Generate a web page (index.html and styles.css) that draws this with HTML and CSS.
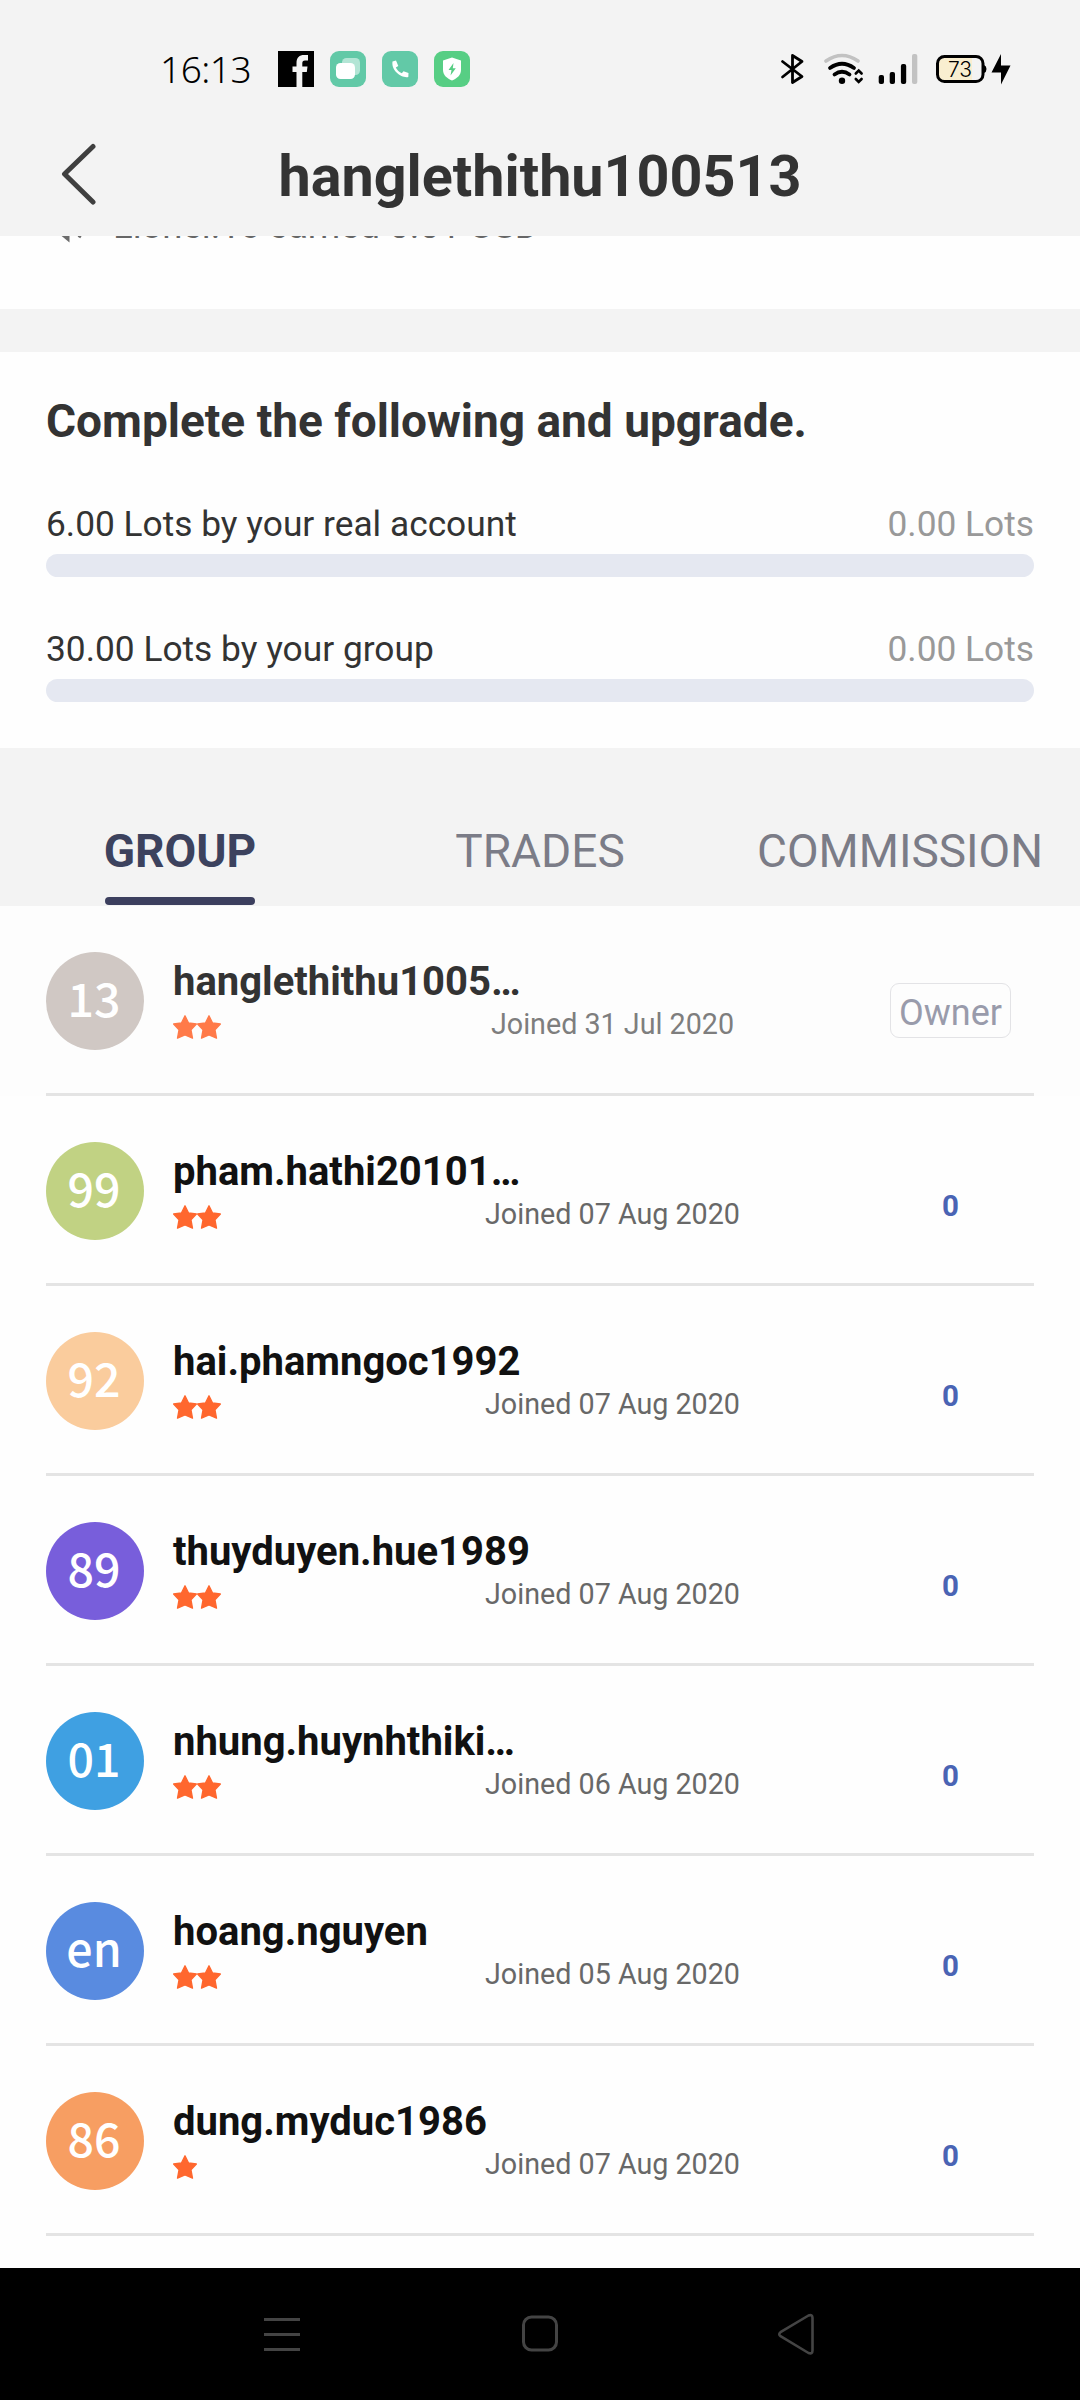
FILE: index.html
```html
<!DOCTYPE html>
<html lang="en">
<head>
<meta charset="utf-8">
<title>hanglethithu100513</title>
<link rel="stylesheet" href="styles.css">
</head>
<body>
<svg class="defs" width="0" height="0" aria-hidden="true">
  <symbol id="star" viewBox="0 0 24 24"><path d="M12 .8 15.6 8 23.4 9 18 14.800 19.500 23.200 12 20 4.500 23.200 6 14.800 .6 9 8.400 8Z" stroke-width="1.300" stroke-linejoin="round"/></symbol>
</svg>
<div class="screen">
  <div class="status">
    <span class="clock">16:13</span>
    <div class="apps">
      <svg width="36" height="36" viewBox="0 0 36 36"><rect width="36" height="36" fill="#000"/><path d="M18.5 36V21H14.5V15.5H18.5V12C18.5 6.5 21.500 4 26 4H30V9.500H27C25 9.500 24.300 10.500 24.300 12.500V15.500H29.500L28.800 21H24.300V36Z" fill="#f3f3f3"/></svg>
      <svg width="36" height="36" viewBox="0 0 36 36"><rect width="36" height="36" rx="9" fill="#62c9a7"/><rect x="12" y="7" width="18" height="17" rx="4.500" fill="#b3e5d5"/><rect x="6" y="12" width="19" height="16" rx="4.500" fill="#fff"/></svg>
      <svg width="36" height="36" viewBox="0 0 36 36"><rect width="36" height="36" rx="9" fill="#62c9a7"/><path d="M10.500 10.500 14 9.500 16.300 15 13.800 16.600C15 19 17.300 21.300 19.800 22.300L21.500 20.200 26.500 22 26.300 26C20 27.500 9 20 10.500 10.500Z" fill="#fff"/></svg>
      <svg width="36" height="36" viewBox="0 0 36 36"><rect width="36" height="36" rx="9" fill="#57ce84"/><path d="M18 6.500 27 9.500V19C27 24 23 27.500 18 29.500 13 27.500 9 24 9 19V9.500Z" fill="#fff"/><path d="M19.500 12 14.500 19H17.500L16.500 24.500 21.800 17.200H18.800Z" fill="#57ce84"/></svg>
    </div>
    <svg class="system" width="232" height="32" viewBox="780 53 232 32">
      <path d="M782.500 61.500 802 76.500 792.500 82.500V55.500L802 61.500 782.500 77" fill="none" stroke="#000" stroke-width="2.800" stroke-linejoin="round" stroke-linecap="round"/>
      <g fill="none" stroke-linecap="round">
        <path d="M826 61Q842 50 858 61" stroke="#c2c2c2" stroke-width="3.600"/>
        <path d="M830 68Q842 59.500 854 68" stroke="#000" stroke-width="3.800"/>
        <path d="M834.500 74.500Q842 69 849.500 74.500" stroke="#000" stroke-width="3.800"/>
        <path d="M855.800 73.500 858.700 70.500 861.600 73.500M855.800 79 858.700 82 861.600 79" stroke="#000" stroke-width="2.600"/>
      </g>
      <circle cx="842" cy="80.800" r="3.200"/>
      <rect x="878.700" y="75" width="5.300" height="9" rx="2"/>
      <rect x="889.700" y="72" width="5.300" height="12" rx="2"/>
      <rect x="900.900" y="64" width="5.300" height="20" rx="2"/>
      <rect x="912" y="54" width="5.300" height="30" rx="2" fill="#c2c2c2"/>
      <path d="M944 58H972V80H944Q939 80 939 75V63Q939 58 944 58Z" fill="#f9eed0"/>
      <rect x="937.500" y="56.500" width="45.500" height="25" rx="7" fill="none" stroke="#000" stroke-width="3"/>
      <path d="M984 65Q986.500 66 986.500 69T984 73Z"/>
      <text x="960" y="76.500" class="charge" text-anchor="middle">73</text>
      <path d="M1001 54 991.500 72.500H1001V84.500L1010.500 65.500H1001Z"/>
    </svg>
  </div>
  <header class="appbar">
    <svg class="back" width="36" height="62" viewBox="0 0 36 62"><path d="M32 3.500 3.500 31 32 59" fill="none" stroke="#3f3f3f" stroke-width="5" stroke-linecap="round" stroke-linejoin="round"/></svg>
    <h1>hanglethithu100513</h1>
  </header>
  <div class="notice">
    <div class="notice-line">
      <svg width="30" height="34" viewBox="0 0 30 34"><path d="M2 10 13.500 2V33.500L2 24Z" fill="#6b6b6b"/><path d="M23 28.500Q30 17 23 6" fill="none" stroke="#6b6b6b" stroke-width="3"/></svg>
      <span>Lionel.Tc earned 0.01 USD</span>
    </div>
  </div>
  <section class="upgrade">
    <h2>Complete the following and upgrade.</h2>
    <div class="goal"><div class="goal-text"><span>6.00 Lots by your real account</span><span class="done">0.00 Lots</span></div><div class="bar"></div></div>
    <div class="goal"><div class="goal-text"><span>30.00 Lots by your group</span><span class="done">0.00 Lots</span></div><div class="bar"></div></div>
  </section>
  <nav class="tabs">
    <span class="tab active">GROUP</span>
    <span class="tab">TRADES</span>
    <span class="tab">COMMISSION</span>
  </nav>
  <main class="members">
    <div class="member owner"><div class="row"><div class="avatar tone-grey">13</div><div class="info"><div class="name">hanglethithu1005…</div><div class="meta"><div class="stars"><svg><use href="#star"/></svg><svg><use href="#star"/></svg></div><div class="joined">Joined 31 Jul 2020</div></div></div><div class="value"><span class="badge">Owner</span></div></div></div>
    <div class="member"><div class="row"><div class="avatar tone-green">99</div><div class="info"><div class="name">pham.hathi20101…</div><div class="meta"><div class="stars"><svg><use href="#star"/></svg><svg><use href="#star"/></svg></div><div class="joined">Joined 07 Aug 2020</div></div></div><div class="value">0</div></div></div>
    <div class="member"><div class="row"><div class="avatar tone-peach">92</div><div class="info"><div class="name">hai.phamngoc1992</div><div class="meta"><div class="stars"><svg><use href="#star"/></svg><svg><use href="#star"/></svg></div><div class="joined">Joined 07 Aug 2020</div></div></div><div class="value">0</div></div></div>
    <div class="member"><div class="row"><div class="avatar tone-purple">89</div><div class="info"><div class="name">thuyduyen.hue1989</div><div class="meta"><div class="stars"><svg><use href="#star"/></svg><svg><use href="#star"/></svg></div><div class="joined">Joined 07 Aug 2020</div></div></div><div class="value">0</div></div></div>
    <div class="member"><div class="row"><div class="avatar tone-sky">01</div><div class="info"><div class="name">nhung.huynhthiki…</div><div class="meta"><div class="stars"><svg><use href="#star"/></svg><svg><use href="#star"/></svg></div><div class="joined">Joined 06 Aug 2020</div></div></div><div class="value">0</div></div></div>
    <div class="member"><div class="row"><div class="avatar tone-blue">en</div><div class="info"><div class="name">hoang.nguyen</div><div class="meta"><div class="stars"><svg><use href="#star"/></svg><svg><use href="#star"/></svg></div><div class="joined">Joined 05 Aug 2020</div></div></div><div class="value">0</div></div></div>
    <div class="member"><div class="row"><div class="avatar tone-orange">86</div><div class="info"><div class="name">dung.myduc1986</div><div class="meta"><div class="stars"><svg><use href="#star"/></svg></div><div class="joined">Joined 07 Aug 2020</div></div></div><div class="value">0</div></div></div>
  </main>
  <footer class="sysnav">
    <svg width="40" height="44" viewBox="0 0 40 44"><path d="M2 7.500H38M2 22.500H38M2 37.500H38"/></svg>
    <svg width="40" height="44" viewBox="0 0 40 44"><rect x="4.500" y="5" width="33" height="33" rx="8"/></svg>
    <svg width="40" height="44" viewBox="0 0 40 44"><path d="M4.500 20.200 32.500 3.500Q36.500 2 36.500 6V38.500Q36.500 42.500 32.500 41L4.500 24.200Q2 22.200 4.500 20.200Z" stroke-width="2.600"/></svg>
  </footer>
</div>
</body>
</html>
```
FILE: styles.css
```css
* { box-sizing: border-box; }
body { margin: 0; background: #fff; font-family: Roboto, sans-serif; }
h1, h2 { margin: 0; }
svg { display: block; }
.defs { position: absolute; }
.screen { width: 1080px; height: 2400px; display: flex; flex-direction: column; overflow: hidden; background: #fefefe; white-space: nowrap; }

.status { height: 116px; flex: none; display: flex; align-items: center; padding: 22px 68px 0 160px; background: #f3f3f3; }
.clock { width: 118px; font: 300 37px/44px "Noto Sans", sans-serif; letter-spacing: -.5px; color: #000; }
.apps { display: flex; gap: 16px; }
.system { margin-left: auto; }
.charge { font: 300 21px Inter, sans-serif; }

.appbar { height: 120px; flex: none; display: grid; grid-template-columns: 180px 720px 180px; align-items: center; background: #f3f3f3; }
.back { margin: -5px 0 0 61px; }
h1 { padding-top: 2px; text-align: center; font-size: 57.500px; line-height: 70px; font-weight: 700; color: #333; }

.notice { height: 73px; flex: none; overflow: hidden; padding-left: 56px; }
.notice-line { display: flex; align-items: center; gap: 27px; margin-top: -30px; height: 40px; font-size: 36.500px; line-height: 40px; color: #666; }

.upgrade { height: 439px; flex: none; border-top: 43px solid #f3f3f3; padding: 42px 46px 0; color: #333; }
h2 { font-size: 46px; line-height: 54px; font-weight: 700; margin-bottom: 55px; }
.goal { margin-bottom: 50px; }
.goal-text { display: flex; justify-content: space-between; font-size: 35.300px; line-height: 42px; }
.done { color: #999; }
.bar { height: 23px; margin-top: 9px; border-radius: 12px; background: #e5e8f1; }
.goal + .goal { margin-top: 51px; }

.tabs { height: 158px; flex: none; display: grid; grid-template-columns: repeat(3, 1fr); justify-items: center; align-items: end; padding-bottom: 1px; background: #f3f3f3; }
.tab { display: flex; flex-direction: column; font-size: 46px; line-height: 54px; color: #7b7c87; }
.tab::after { content: ""; height: 8px; margin: 19px 1px 0; border-radius: 4px; }
.active { color: #3c425e; font-weight: 700; }
.active::after { background: #3c3f5e; }

.members { height: 1362px; flex: none; }
.member { height: 190px; padding: 0 46px; }
.row { display: flex; align-items: flex-start; height: 190px; border-bottom: 3px solid #e4e4e4; }
.avatar { width: 98px; height: 98px; margin-top: 46px; padding-right: 2px; border-radius: 50%; text-align: center; color: #fff; font: 500 46.500px/90px "Noto Sans CJK SC", sans-serif; }
.info { width: 593px; margin: 52px 101px 0 29px; }
.name { font-size: 40px; line-height: 48px; font-weight: 700; color: #111; }
.meta { display: flex; align-items: center; margin-top: 3px; height: 30px; }
.stars { width: 286px; display: flex; margin-top: 6px; }
.stars svg { width: 24px; height: 24px; fill: #ff672e; stroke: #ff672e; }
.joined { width: 307px; text-align: center; font-size: 28.700px; line-height: 30px; color: #686868; }
.value { width: 167px; margin-top: 90px; text-align: center; font-size: 29.500px; line-height: 40px; font-weight: 700; color: #4a64b4; }

.owner { background: #fdfdfd; }
.owner .name { color: #333; }
.owner .joined { color: #7e7e7e; }
.owner .stars svg { fill: #ff7a49; stroke: #ff7a49; }
.owner .value { margin-top: 77px; }
.badge { display: block; width: 121px; height: 55px; margin: 0 auto; border: 1px solid #e3e3e6; border-radius: 9px; font-size: 36px; line-height: 59px; font-weight: 400; color: #999bab; }

.tone-grey { background: #d0c8c4; }
.tone-green { background: #c1d283; }
.tone-peach { background: #facc9d; }
.tone-purple { background: #785edb; }
.tone-sky { background: #3fa0e2; }
.tone-blue { background: #598be0; }
.tone-orange { background: #f79e62; }

.sysnav { flex: 1; display: flex; justify-content: space-between; padding: 44px 264px 0 262px; background: #000; }
.sysnav svg { fill: none; stroke: #444; stroke-width: 3; stroke-linejoin: round; }
```
